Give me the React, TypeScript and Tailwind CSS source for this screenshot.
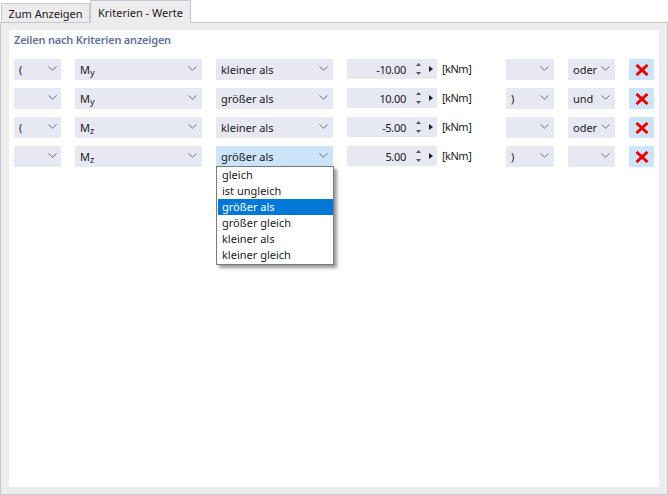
import React from 'react'

type Row = {
  open: string
  sym: string
  sub: string
  op: string
  value: string
  close: string
  join: string
  active?: boolean
}

const rows: Row[] = [
  { open: '(', sym: 'M', sub: 'y', op: 'kleiner als', value: '-10.00', close: '', join: 'oder' },
  { open: '', sym: 'M', sub: 'y', op: 'größer als', value: '10.00', close: ')', join: 'und' },
  { open: '(', sym: 'M', sub: 'z', op: 'kleiner als', value: '-5.00', close: '', join: 'oder' },
  { open: '', sym: 'M', sub: 'z', op: 'größer als', value: '5.00', close: ')', join: '', active: true },
]

const options = ['gleich', 'ist ungleich', 'größer als', 'größer gleich', 'kleiner als', 'kleiner gleich']

const Chevron = () => (
  <svg width="9" height="5" viewBox="0 0 9 5" className="shrink-0">
    <path d="M0.5 0.5 L4.5 4.2 L8.5 0.5" fill="none" stroke="#6d6e76" strokeWidth="1" />
  </svg>
)

const Select = ({
  className,
  active,
  chevronClass = 'mr-[5px]',
  children,
}: {
  className: string
  active?: boolean
  chevronClass?: string
  children?: React.ReactNode
}) => (
  <div
    className={`flex h-[21px] items-center justify-between pl-[5px] ${
      active ? 'bg-[#cce4f7]' : 'bg-[#e8e8f2]'
    } ${className}`}
  >
    <span className="whitespace-nowrap">{children}</span>
    <span className={`-mt-[2px] flex ${chevronClass}`}>
      <Chevron />
    </span>
  </div>
)

const Spinner = ({ value }: { value: string }) => (
  <div className="flex h-[20px] w-[90px] items-center bg-[#e8e8f2]">
    <span className="w-[59px] text-right tracking-[-0.3px]">{value}</span>
    <svg width="26" height="20" viewBox="0 0 26 20" className="ml-[2px] shrink-0">
      <path d="M8 7 L10.5 4 L13 7 Z" fill="#55565c" />
      <path d="M8 13 L10.5 16 L13 13 Z" fill="#55565c" />
      <path d="M21 7 L25 10 L21 13 Z" fill="#222222" />
    </svg>
  </div>
)

const RemoveButton = () => (
  <div className="flex h-[21px] w-[25px] items-center justify-center bg-[#cce4f7]">
    <svg width="14" height="12" viewBox="0 0 14 12">
      <path d="M1.5 1 L12.5 11 M12.5 1 L1.5 11" stroke="#f00000" strokeWidth="3" />
    </svg>
  </div>
)

const App = () => {
  return (
    <div className="flex h-[495px] w-[668px] flex-col overflow-hidden bg-white font-['Noto_Sans',sans-serif] text-[11px] leading-[15px] text-[#1a1a1a]">
      <div className="flex h-[22px] items-end pl-[1px]">
        <div className="flex h-[19px] w-[89px] items-center justify-center border border-b-0 border-[#c6c6d0] bg-[#ececec]">
          Zum Anzeigen
        </div>
        <div className="relative z-10 -mb-[1px] flex h-[23px] w-[101px] items-center justify-center border border-b-0 border-[#c6c6d0] bg-[#ececec]">
          Kriterien - Werte
        </div>
      </div>
      <div className="flex-1 border border-[#c6c6d0] bg-[#ececec] pb-[7px] pl-[8px] pr-[8px] pt-[7px]">
        <div className="relative h-full bg-white pl-[5px] pt-[1px]">
          <div className="h-[18px] font-semibold leading-[18px] tracking-[-0.2px] text-[#64719a]">
            Zeilen nach Kriterien anzeigen
          </div>
          <div className="mt-[10px] flex flex-col gap-[8px]">
            {rows.map((row, i) => (
              <div key={i} className="flex h-[21px] items-start">
                <Select className="w-[47px]" chevronClass="mr-[4px]">
                  {row.open}
                </Select>
                <Select className="ml-[14px] w-[127px]">
                  {row.sym}
                  <sub className="text-[9px]">{row.sub}</sub>
                </Select>
                <Select className="ml-[14px] w-[117px]" active={row.active}>
                  {row.op}
                </Select>
                <div className="ml-[14px]">
                  <Spinner value={row.value} />
                </div>
                <span className="ml-[5px] w-[64px] pt-[2px] tracking-[-0.5px]">[kNm]</span>
                <Select className="w-[48px]">{row.close}</Select>
                <Select className="ml-[14px] w-[47px]">{row.join}</Select>
                <div className="ml-[14px]">
                  <RemoveButton />
                </div>
              </div>
            ))}
          </div>
          {/* aufgeklappte Liste der letzten Zeile */}
          <div className="absolute left-[207px] top-[136px] w-[118px] border border-[#7a7a7a] bg-white pb-[1px] pl-[1px] shadow-[3px_3px_3px_rgba(90,90,90,0.6)]">
            {options.map((o) => (
              <div
                key={o}
                className={`h-[16px] pl-[4px] leading-[16px] ${o === 'größer als' ? 'bg-[#0078d7] text-white' : ''}`}
              >
                {o}
              </div>
            ))}
          </div>
        </div>
      </div>
    </div>
  )
}

export default App
